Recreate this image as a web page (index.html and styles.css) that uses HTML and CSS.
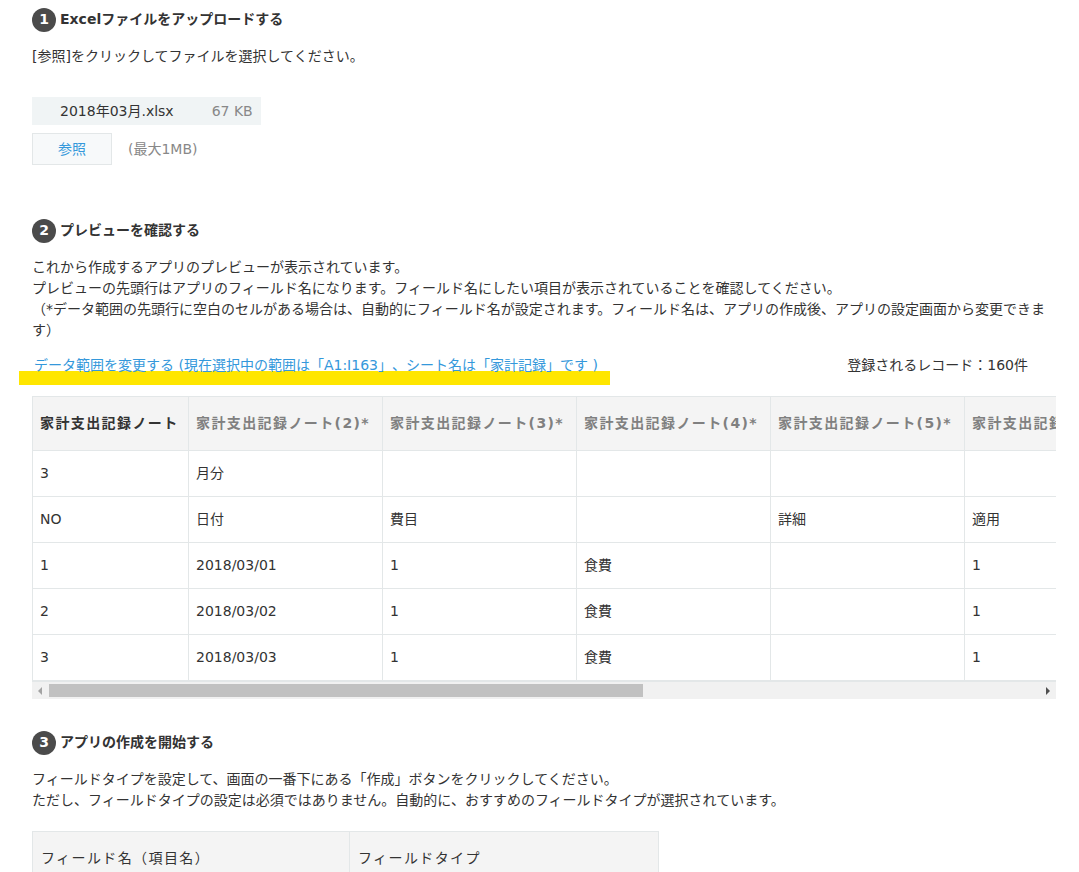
FILE: index.html
```html
<!DOCTYPE html>
<html lang="ja">
<head>
<meta charset="utf-8">
<meta name="viewport" content="width=device-width, initial-scale=1">
<title>Excelファイルからアプリを作成</title>
<link rel="stylesheet" href="styles.css">
</head>
<body>
<main class="page">
  <section class="step">
    <h2 class="step-title"><span class="step-number">1</span>Excelファイルをアップロードする</h2>
    <p class="step-text">[参照]をクリックしてファイルを選択してください。</p>
    <div class="upload">
      <div class="file"><span class="file-name">2018年03月.xlsx</span><span class="file-size">67 KB</span></div>
      <div class="browse">
        <button class="browse-button" type="button">参照</button>
        <span class="browse-limit">(最大1MB)</span>
      </div>
    </div>
  </section>

  <section class="step">
    <h2 class="step-title"><span class="step-number">2</span>プレビューを確認する</h2>
    <p class="step-text">これから作成するアプリのプレビューが表示されています。<br>プレビューの先頭行はアプリのフィールド名になります。フィールド名にしたい項目が表示されていることを確認してください。<br>（*データ範囲の先頭行に空白のセルがある場合は、自動的にフィールド名が設定されます。フィールド名は、アプリの作成後、アプリの設定画面から変更できます）</p>
    <div class="range">
      <a class="range-link" href="#range">データ範囲を変更する (現在選択中の範囲は「A1:I163」、シート名は「家計記録」です )</a>
      <span class="range-count">登録されるレコード：160件</span>
    </div>
    <div class="preview">
      <table class="preview-table">
        <thead>
          <tr><th class="named">家計支出記録ノート</th><th>家計支出記録ノート(2)*</th><th>家計支出記録ノート(3)*</th><th>家計支出記録ノート(4)*</th><th>家計支出記録ノート(5)*</th><th>家計支出記録ノート(6)*</th></tr>
        </thead>
        <tbody>
          <tr><td>3</td><td>月分</td><td></td><td></td><td></td><td></td></tr>
          <tr><td>NO</td><td>日付</td><td>費目</td><td></td><td>詳細</td><td>適用</td></tr>
          <tr><td>1</td><td>2018/03/01</td><td>1</td><td>食費</td><td></td><td>1</td></tr>
          <tr><td>2</td><td>2018/03/02</td><td>1</td><td>食費</td><td></td><td>1</td></tr>
          <tr><td>3</td><td>2018/03/03</td><td>1</td><td>食費</td><td></td><td>1</td></tr>
        </tbody>
      </table>
    </div>
    <div class="scrollbar" aria-hidden="true">
      <svg class="scroll-arrow" viewBox="0 0 17 17"><path d="M10 5v8L6 9z" fill="#a3a3a3"/></svg>
      <div class="scroll-track"><div class="scroll-thumb"></div></div>
      <svg class="scroll-arrow" viewBox="0 0 17 17"><path d="M7 5v8l4-4z" fill="#505050"/></svg>
    </div>
  </section>

  <section class="step">
    <h2 class="step-title"><span class="step-number">3</span>アプリの作成を開始する</h2>
    <p class="step-text">フィールドタイプを設定して、画面の一番下にある「作成」ボタンをクリックしてください。<br>ただし、フィールドタイプの設定は必須ではありません。自動的に、おすすめのフィールドタイプが選択されています。</p>
    <table class="field-table">
      <thead>
        <tr><th class="field-name">フィールド名（項目名）</th><th class="field-type">フィールドタイプ</th></tr>
      </thead>
    </table>
  </section>
</main>
</body>
</html>
```

FILE: styles.css
```css
* {
  box-sizing: border-box;
}

body {
  margin: 0;
  background: #fff;
  color: #333;
  font-family: "DejaVu Sans", "Noto Sans CJK JP", sans-serif;
  font-size: 14px;
  line-height: 21px;
  text-spacing-trim: space-all;
}

.page {
  padding: 8px 23px 0 32px;
}

.step-title {
  display: flex;
  align-items: flex-start;
  gap: 4px;
  margin: 0 0 14px;
  height: 24px;
  font-size: 14px;
  font-weight: 700;
  line-height: 22px;
}

.step-number {
  width: 24px;
  height: 24px;
  border-radius: 50%;
  background: #4b4b4b;
  color: #fff;
  text-align: center;
}

.step-text {
  margin: 0;
}

.upload {
  display: flex;
  flex-direction: column;
  align-items: flex-start;
  gap: 8px;
  padding: 30px 0 54px;
}

.file {
  display: flex;
  align-items: center;
  gap: 38px;
  height: 28px;
  padding: 0 8px 0 28px;
  background: #f0f4f5;
}

.file-size,
.browse-limit {
  color: #888;
}

.browse {
  display: flex;
  align-items: center;
  gap: 16px;
}

.browse-button {
  width: 80px;
  height: 32px;
  padding: 0;
  border: 1px solid #e3e7e8;
  background: #f7f9fa;
  color: #3498db;
  font: inherit;
}

.range {
  display: flex;
  justify-content: space-between;
  padding: 14px 28px 20px 2px;
}

.range-link {
  position: relative;
  z-index: 0;
  color: #3498db;
  text-decoration: none;
}

/* Marker stroke under the link */
.range-link::before {
  content: "";
  position: absolute;
  z-index: -1;
  left: -15px;
  right: -12px;
  top: 16px;
  height: 14px;
  background: #ffe600;
}

.preview {
  overflow: hidden;
  border-bottom: 1px solid #e3e7e8;
}

.preview-table,
.field-table {
  border-collapse: separate;
  border-spacing: 0;
  table-layout: fixed;
}

.preview-table {
  width: 1127px;
}

.preview-table th,
.preview-table td {
  width: 194px;
  height: 46px;
  padding: 0 7px;
  border-right: 1px solid #e3e7e8;
  border-bottom: 1px solid #e3e7e8;
  text-align: left;
  white-space: nowrap;
}

.preview-table th:first-child,
.preview-table td:first-child {
  width: 157px;
  border-left: 1px solid #e3e7e8;
}

.preview-table th {
  height: 55px;
  border-top: 1px solid #e3e7e8;
  background: #f4f4f4;
  color: #808080;
  letter-spacing: 0.1em;
}

.preview-table .named {
  color: #333;
}

.scrollbar {
  display: flex;
  height: 17px;
  margin-bottom: 32px;
  background: #f1f1f1;
}

.scroll-arrow {
  width: 17px;
  height: 17px;
}

.scroll-track {
  flex: 1;
  padding: 2px 0;
}

.scroll-thumb {
  width: 60%;
  height: 13px;
  background: #c1c1c1;
}

.field-table {
  margin-top: 20px;
}

.field-table th {
  height: 55px;
  padding: 0 8px;
  border: 1px solid #e3e7e8;
  border-left: 0;
  background: #f4f4f4;
  font-weight: 400;
  letter-spacing: 0.1em;
  text-align: left;
}

.field-table .field-name {
  width: 318px;
  border-left: 1px solid #e3e7e8;
}

.field-table .field-type {
  width: 309px;
}
```
